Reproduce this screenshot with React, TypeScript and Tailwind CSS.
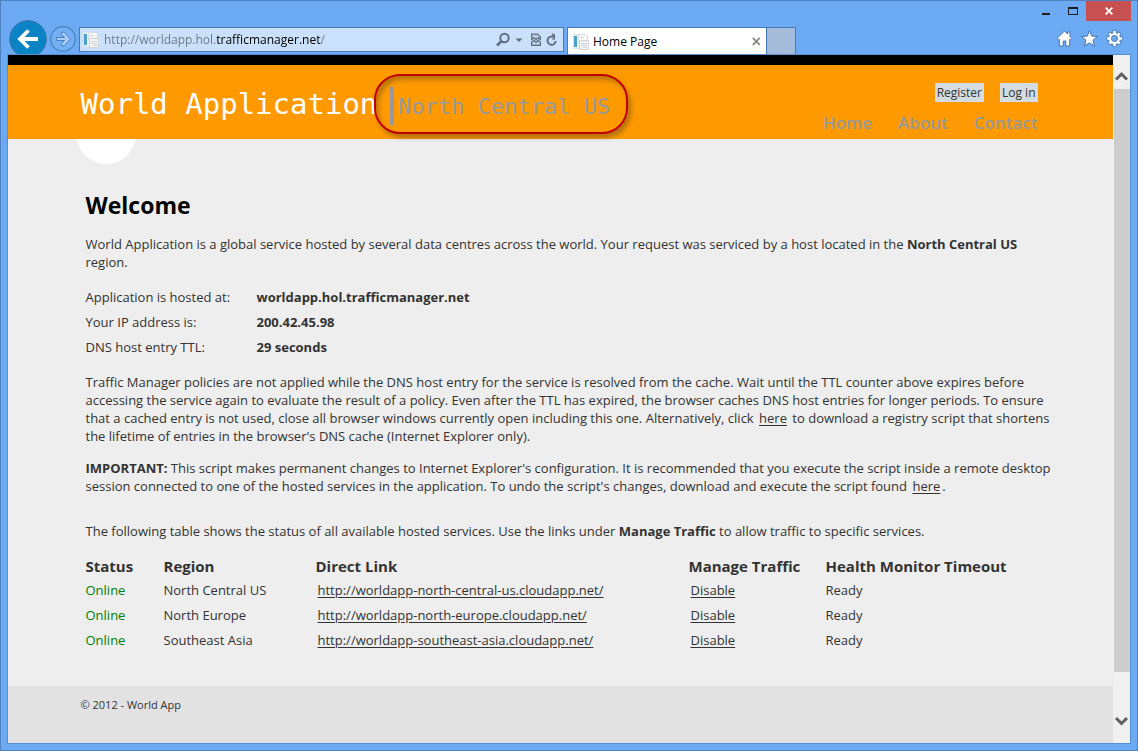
import type { ReactNode } from "react";

type Service = { region: string; url: string };

const services: Service[] = [
  { region: "North Central US", url: "http://worldapp-north-central-us.cloudapp.net/" },
  { region: "North Europe", url: "http://worldapp-north-europe.cloudapp.net/" },
  { region: "Southeast Asia", url: "http://worldapp-southeast-asia.cloudapp.net/" },
];

const hostInfo = [
  { label: "Application is hosted at:", value: "worldapp.hol.trafficmanager.net" },
  { label: "Your IP address is:", value: "200.42.45.98" },
  { label: "DNS host entry TTL:", value: "29 seconds" },
];

function PageIcon() {
  return (
    <svg className="h-4 w-4 shrink-0" viewBox="0 0 16 16" aria-hidden="true">
      <path d="M.5.5h6v14h-6z" fill="#eef4f8" stroke="#dde4e9" />
      <path d="M1 2h3v11H1z" fill="#4f9fcb" />
      <path d="M5.500.5h7l2 2v5h-9z" fill="#f7f7f7" stroke="#dadada" />
      <path d="M6.500 6.500h9v9h-9z" fill="#f4f4f4" stroke="#d0d4d7" />
      <path d="M8 9.500h6M8 11.500h6M10 13.500h4M7 3.500h4" stroke="#cfd4d8" />
    </svg>
  );
}

function WindowControls() {
  return (
    <div className="flex h-[19px] items-start justify-end pr-[6px]">
      <button type="button" aria-label="Minimize" className="flex h-5 w-[27px] items-center justify-center">
        <svg className="h-5 w-[27px]" viewBox="0 0 27 20"><path d="M6 12h8v2H6z" fill="#1e1e1e" /></svg>
      </button>
      <button type="button" aria-label="Maximize" className="flex h-5 w-[23px] items-center justify-center">
        <svg className="h-5 w-[23px]" viewBox="0 0 23 20"><path d="M5 6h10v8H5zM6 8v5h8V8z" fill="#1e1e1e" fillRule="evenodd" /></svg>
      </button>
      <button type="button" aria-label="Close" className="flex h-5 w-[45px] items-center justify-center bg-[#c75050]">
        <svg className="h-2 w-2" viewBox="0 0 8 8"><path d="M.7.7l6.600 6.600M7.300.7L.7 7.300" stroke="#fff" strokeWidth="1.800" /></svg>
      </button>
    </div>
  );
}

function Toolbar() {
  return (
    <div className="flex h-[34px] items-start overflow-hidden pl-2 pr-[14px]">
      <button type="button" aria-label="Back" className="mr-[3px] h-[38px] w-[38px] shrink-0">
        <svg className="h-[38px] w-[38px]" viewBox="0 0 38 38">
          <circle cx="19" cy="19" r="18.300" fill="#0a84c4" stroke="#3d6fa5" strokeWidth="1" />
          <path d="M29 19H11.500M19.500 10.500L11 19l8.500 8.500" fill="none" stroke="#fff" strokeWidth="3.800" />
        </svg>
      </button>
      <button type="button" aria-label="Forward" className="mt-[6px] mr-[2px] h-[26px] w-[27px] shrink-0">
        <svg className="h-[26px] w-[27px]" viewBox="0 0 27 26">
          <circle cx="13" cy="13" r="12.300" fill="#72aff5" stroke="#4a80bd" strokeWidth="1.200" />
          <path d="M6.500 11.500h8l-3-3v-2.300h2.500l6.500 6.800-6.500 6.800h-2.500v-2.300l3-3h-8z" fill="#aacdf7" stroke="#4a80bd" />
        </svg>
      </button>
      <form className="mt-[7px] flex h-[25px] w-[485px] items-center border border-[#4879b5] bg-[#cbe1fb] pl-[3px] pr-[5px]">
        <PageIcon />
        <input
          type="text"
          aria-label="Address"
          defaultValue="http://worldapp.hol.trafficmanager.net/"
          className="ml-[5px] min-w-0 flex-1 bg-[linear-gradient(90deg,#6b7580_112px,#000_112px,#000_217px,#6b7580_217px)] bg-clip-text text-[12px] text-transparent outline-none"
        />
        <button type="button" aria-label="Search" className="flex h-4 w-[27px] items-center">
          <svg className="h-4 w-[27px]" viewBox="0 0 27 16">
            <circle cx="8.500" cy="6" r="4.200" fill="none" stroke="#5f6f80" strokeWidth="2" />
            <path d="M5.500 9L1 13.500" stroke="#5f6f80" strokeWidth="2.500" />
            <path d="M19.500 6.500h7L23 10z" fill="#5f6f80" />
          </svg>
        </button>
        <button type="button" aria-label="Compatibility view" className="ml-2 h-4 w-[10px]">
          <svg className="h-4 w-[10px]" viewBox="0 0 10 16">
            <path d="M.6 7.500V2.100h6L9.400 4.900v2.600L7.200 5.800 5 7.800 2.800 5.800z" fill="#b7cbe2" stroke="#5f6f80" strokeWidth="1.200" />
            <path d="M.6 10.200l2.200-1.900L5 10.300l2.200-2 2.200 1.900v3.200H.6z" fill="#b7cbe2" stroke="#5f6f80" strokeWidth="1.200" />
          </svg>
        </button>
        <button type="button" aria-label="Refresh" className="ml-[5px] h-4 w-3">
          <svg className="h-4 w-3" viewBox="0 0 12 16">
            <path d="M7 4.500H5.500a4.100 4.100 0 1 0 4.200 4.500" fill="none" stroke="#5f6f80" strokeWidth="2" />
            <path d="M5.500 1.500h2v1.500L9 1.800V7.500H5.500L7.500 5.500z" fill="#5f6f80" />
          </svg>
        </button>
      </form>
      <div className="ml-[3px] mt-[7px] flex h-[27px] w-[200px] items-center border border-b-0 border-[#4879b5] bg-white pl-[5px] pr-[5px] pt-px">
        <PageIcon />
        <span className="ml-1 flex-1 text-[12px] text-black">Home Page</span>
        <button type="button" aria-label="Close tab">
          <svg className="h-[9px] w-[9px]" viewBox="0 0 9 9"><path d="M.8.8l7 7M7.800.8l-7 7" stroke="#858585" strokeWidth="1.700" /></svg>
        </button>
      </div>
      <button type="button" aria-label="New tab" className="mt-[7px] h-[27px] w-[29px] border border-b-0 border-l-0 border-[#4879b5] bg-[#a4bbda]" />
      <div className="ml-auto mt-[10px] flex gap-2">
        <button type="button" aria-label="Home">
          <svg className="h-[17px] w-[17px]" viewBox="0 0 17 17">
            <path d="M8.500 1L1 8.500l1.500 1.400.8-.8V16h3.900v-5h2.600v5h3.900V9.100l.8.8L16 8.500l-2-2V2h-2.500v2z" fill="#fff" stroke="#4674ad" />
          </svg>
        </button>
        <button type="button" aria-label="Favorites">
          <svg className="h-[17px] w-[17px]" viewBox="0 0 17 17">
            <path d="M8.500.7l2.200 5.400 5.800.4-4.500 3.700 1.500 5.800-5-3.200-5 3.200L5 10.200.5 6.500l5.800-.4z" fill="#fff" stroke="#4674ad" />
          </svg>
        </button>
        <button type="button" aria-label="Tools">
          <svg className="h-[17px] w-[17px]" viewBox="0 0 17 17">
            <g stroke="#4674ad" strokeWidth="4.200">
              <path d="M8.500.5v16M.5 8.500h16M2.800 2.800l11.400 11.400M14.200 2.800L2.800 14.200" />
            </g>
            <circle cx="8.500" cy="8.500" r="6.200" fill="#4674ad" />
            <g stroke="#fff" strokeWidth="2.600">
              <path d="M8.500 1v15M1 8.500h15M3.300 3.300l10.400 10.400M13.700 3.300L3.300 13.700" />
            </g>
            <circle cx="8.500" cy="8.500" r="5.500" fill="#fff" />
            <circle cx="8.500" cy="8.500" r="3" fill="#6caaf4" stroke="#4674ad" />
          </svg>
        </button>
      </div>
    </div>
  );
}

function SiteHeader() {
  return (
    <header className="border-t-[10px] border-black bg-[#ff9900]">
      <div className="mx-auto flex h-[74px] max-w-[960px] items-start justify-between">
        <div className="flex items-start font-['DejaVu_Sans_Mono',monospace]">
          <h1 className="mt-[21px] text-[29px] leading-9 text-white">World Application</h1>
          <div className="relative ml-[13px] mt-[22px] flex h-[38px] items-center border-l-4 border-[#999] pl-1 text-[22px] text-[#999]">
            North Central US
            <span className="absolute -bottom-[9px] -left-5 -right-[18px] -top-[13px] rounded-[26px] border-2 border-[#c00000] shadow-[3px_4px_4px_rgba(90,70,30,0.45),inset_3px_4px_4px_rgba(90,70,30,0.4)]" />
          </div>
        </div>
        <div className="flex flex-col items-end pr-[3px] pt-[18px]">
          <div className="flex gap-4 text-[12px] leading-[19px] text-[#333]">
            <a href="#register" className="bg-[#d3dce0] px-[2px]">Register</a>
            <a href="#login" className="bg-[#d3dce0] px-[2px]">Log in</a>
          </div>
          <nav className="mt-[9px] flex gap-[26px] text-[17px] font-semibold leading-6 text-[#999]">
            <a href="#home">Home</a>
            <a href="#about">About</a>
            <a href="#contact">Contact</a>
          </nav>
        </div>
      </div>
    </header>
  );
}

function InlineLink({ href, children }: { href: string; children: ReactNode }) {
  return (
    <a href={href} className="mx-[2px] underline underline-offset-2">
      {children}
    </a>
  );
}

function Main() {
  return (
    <main className="mx-auto w-full max-w-[960px] flex-1 text-[13px] leading-[18px] text-[#333]">
      <svg className="-ml-[5px] block h-[25px] w-[60px]" viewBox="0 0 60 25" aria-hidden="true">
        <ellipse cx="30" cy="-5" rx="30" ry="30" fill="#fff" />
      </svg>
      <div className="-mr-4 pl-[5px]">
        <h2 className="mt-[25px] text-[23px] font-bold leading-8 text-black">Welcome</h2>
        <p className="mt-[14px]">
          World Application is a global service hosted by several data centres across the world. Your request was
          serviced by a host located in the <b>North Central US</b> region.
        </p>
        <dl className="mt-[14px] grid grid-cols-[171px_1fr] leading-[25px]">
          {hostInfo.map((item) => (
            <div key={item.label} className="contents">
              <dt>{item.label}</dt>
              <dd className="font-bold">{item.value}</dd>
            </div>
          ))}
        </dl>
        <p className="mt-[13px]">
          Traffic Manager policies are not applied while the DNS host entry for the service is resolved from the cache.
          Wait until the TTL counter above expires before accessing the service again to evaluate the result of a
          policy. Even after the TTL has expired, the browser caches DNS host entries for longer periods. To ensure
          that a cached entry is not used, close all browser windows currently open including this one. Alternatively,
          click <InlineLink href="#ttl-script">here</InlineLink> to download a registry script that shortens the
          lifetime of entries in the browser's DNS cache (Internet Explorer only).
        </p>
        <p className="mt-[14px]">
          <b>IMPORTANT:</b> This script makes permanent changes to Internet Explorer's configuration. It is recommended
          that you execute the script inside a remote desktop session connected to one of the hosted services in the
          application. To undo the script's changes, download and execute the script found{" "}
          <InlineLink href="#undo-script">here</InlineLink>.
        </p>
        <p className="mt-[27px]">
          The following table shows the status of all available hosted services. Use the links under{" "}
          <b>Manage Traffic</b> to allow traffic to specific services.
        </p>
        <table className="mt-[14px] w-full table-fixed text-left">
          <thead>
            <tr className="h-[23px] text-[15px]">
              <th className="w-[78px]">Status</th>
              <th className="w-[152px]">Region</th>
              <th className="w-[373px]">Direct Link</th>
              <th className="w-[137px]">Manage Traffic</th>
              <th>Health Monitor Timeout</th>
            </tr>
          </thead>
          <tbody>
            {services.map((service) => (
              <tr key={service.region} className="h-[25px]">
                <td className="text-[#008000]">Online</td>
                <td>{service.region}</td>
                <td><InlineLink href={service.url}>{service.url}</InlineLink></td>
                <td><InlineLink href="#disable">Disable</InlineLink></td>
                <td>Ready</td>
              </tr>
            ))}
          </tbody>
        </table>
      </div>
    </main>
  );
}

function ScrollBar() {
  return (
    <div className="flex w-[17px] shrink-0 flex-col bg-[#f0f0f0] pl-px" aria-hidden="true">
      <svg className="h-[34px] w-4" viewBox="0 0 16 34"><path d="M2 24.500l5.500-5.500 5.500 5.500" fill="none" stroke="#606060" strokeWidth="3" /></svg>
      <div className="flex-1 bg-[#cdcdcd]" />
      <svg className="h-[71px] w-4" viewBox="0 0 16 71"><path d="M2 46l5.500 5.500L13 46" fill="none" stroke="#606060" strokeWidth="3" /></svg>
    </div>
  );
}

export default function App() {
  return (
    <div className="flex min-h-screen flex-col border border-[#4f83bf] bg-[#6caaf4] pb-[6px] font-['Open_Sans','Noto_Sans',sans-serif]">
      <WindowControls />
      <Toolbar />
      <div className="mx-[6px] flex flex-1 border border-[#5590d6]">
        <div className="flex min-w-0 flex-1 flex-col bg-[#eeeeee]">
          <SiteHeader />
          <Main />
          <footer className="bg-[#e2e2e2] pb-[29px] pt-[10px] text-[11px] leading-[18px] text-[#333]">
            <p className="mx-auto max-w-[960px]">© 2012 - World App</p>
          </footer>
        </div>
        <ScrollBar />
      </div>
    </div>
  );
}
